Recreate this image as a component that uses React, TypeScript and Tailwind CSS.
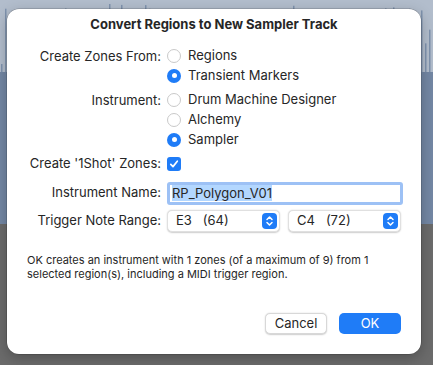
import React from "react";

const font = { fontFamily: "Inter, 'Noto Sans', sans-serif" };

// spikes for the waveform behind the dialog
const spikes = Array.from({ length: 110 }, (_, i) => {
  const v = Math.abs(Math.sin(i * 12.9898) * 43758.5453) % 1;
  return { x: i * 4 + 1, h: 8 + v * 60 };
});

const Backdrop = () => (
  <div className="absolute inset-0 flex flex-col">
    <div className="relative h-[224px] bg-[#7387a4]">
      <svg width="433" height="224" className="absolute inset-0">
        <rect x="0" y="0" width="433" height="72" fill="#b2bdcc" />
        {spikes.map((s) => (
          <rect key={s.x} x={s.x} y={72 - s.h} width="1.5" height={s.h} fill="#7f93ae" />
        ))}
      </svg>
    </div>
    <div className="flex-1 bg-[#6b6b6b]" />
  </div>
);

const Radio = ({ checked, label }: { checked?: boolean; label: string }) => (
  <div className="flex items-center h-[20px]">
    {checked ? (
      <span className="w-[14px] h-[14px] rounded-full bg-[#1f7cf7] flex items-center justify-center">
        <span className="w-[5px] h-[5px] rounded-full bg-white" />
      </span>
    ) : (
      <span className="w-[14px] h-[14px] rounded-full border border-[#c9c9c9] bg-white" />
    )}
    <span className="ml-[7px] text-[13px] text-[#262626]">{label}</span>
  </div>
);

const Stepper = () => (
  <span className="w-[15px] h-[16px] rounded-[4px] bg-[#1f7cf7] flex items-center justify-center">
    <svg width="9" height="12" viewBox="0 0 9 12" fill="none" stroke="white" strokeWidth="1.5" strokeLinecap="round" strokeLinejoin="round">
      <path d="M2 4.5 L4.5 2 L7 4.5" />
      <path d="M2 7.5 L4.5 10 L7 7.5" />
    </svg>
  </span>
);

const Select = ({ note, num }: { note: string; num: string }) => (
  <div className="w-[113px] h-[22px] rounded-[5px] bg-white border border-[#e0e0e0] shadow-[0_0.5px_1.5px_rgba(0,0,0,0.2)] flex items-center justify-between pl-[8px] pr-[2px]">
    <span className="text-[13px] text-[#262626] whitespace-pre">
      {note}
      {"   "}
      {num}
    </span>
    <Stepper />
  </div>
);

const Label = ({ children }: { children: React.ReactNode }) => (
  <span className="w-[160px] pr-[6px] text-right text-[13px] text-[#262626] shrink-0">{children}</span>
);

export default function App() {
  return (
    <div className="relative w-[433px] h-[365px] overflow-hidden" style={font}>
      <Backdrop />
      <div className="absolute left-[7px] top-[9px] w-[414px] h-[345px] rounded-[12px] bg-white shadow-[0_0_0_0.5px_rgba(0,0,0,0.25),0_4px_14px_rgba(0,0,0,0.25)] flex flex-col">
        <h1 className="mt-[6px] text-center text-[13px] font-bold text-[#262626]">
          Convert Regions to New Sampler Track
        </h1>

        <div className="mt-[11px] flex flex-col">
          <div className="flex">
            <Label><span className="leading-[20px]">Create Zones From:</span></Label>
            <div className="flex flex-col">
              <Radio label="Regions" />
              <Radio checked label="Transient Markers" />
            </div>
          </div>

          <div className="flex mt-[4px]">
            <Label><span className="leading-[20px]">Instrument:</span></Label>
            <div className="flex flex-col">
              <Radio label="Drum Machine Designer" />
              <Radio label="Alchemy" />
              <Radio checked label="Sampler" />
            </div>
          </div>

          <div className="flex items-center mt-[4px] h-[20px]">
            <Label>Create '1Shot' Zones:</Label>
            <span className="w-[14px] h-[14px] rounded-[3px] bg-[#1f7cf7] flex items-center justify-center">
              <svg width="10" height="10" viewBox="0 0 10 10" fill="none" stroke="white" strokeWidth="1.7" strokeLinecap="round" strokeLinejoin="round">
                <path d="M1.8 5.3 L4 7.6 L8.3 2.2" />
              </svg>
            </span>
          </div>

          <div className="flex items-center mt-[8px]">
            <Label>Instrument Name:</Label>
            <div className="w-[236px] h-[23px] border-[3px] border-[#9dc1f5] rounded-[3px] bg-white flex items-center pl-[2px]">
              <span className="text-[13px] text-[#262626] bg-[#b3d7ff] leading-[16px]">RP_Polygon_V01</span>
            </div>
          </div>

          <div className="flex items-center mt-[5px]">
            <Label>Trigger Note Range:</Label>
            <div className="flex gap-[8px]">
              <Select note="E3" num="(64)" />
              <Select note="C4" num="(72)" />
            </div>
          </div>
        </div>

        <p className="mt-[21px] px-[20px] text-[11px] leading-[14px] text-[#262626]">
          OK creates an instrument with 1 zones (of a maximum of 9) from 1 selected region(s), including a MIDI trigger region.
        </p>

        <div className="mt-auto mb-[20px] mr-[20px] flex justify-end gap-[12px]">
          <button className="w-[62px] h-[21px] rounded-[5px] bg-white border border-[#d8d8d8] shadow-[0_0.5px_1.5px_rgba(0,0,0,0.2)] text-[13px] text-[#262626]">
            Cancel
          </button>
          <button className="w-[62px] h-[21px] rounded-[5px] bg-[#1f7cf7] text-[13px] text-white">
            OK
          </button>
        </div>
      </div>
    </div>
  );
}
